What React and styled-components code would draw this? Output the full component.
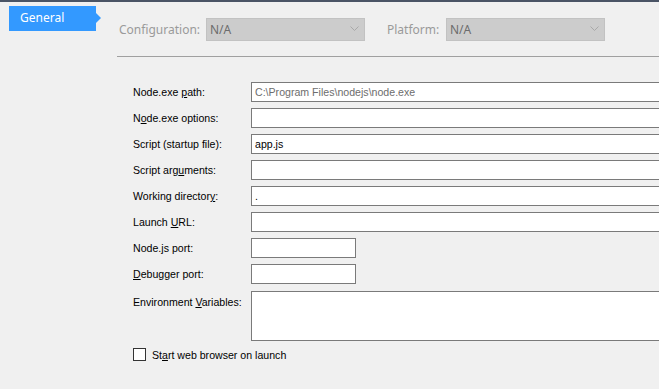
import React from 'react';
import styled, { createGlobalStyle } from 'styled-components';

const GlobalStyle = createGlobalStyle`
  html, body {
    margin: 0;
    padding: 0;
    background: #f0f0f0;
    overflow: hidden;
  }
`;

const Window = styled.div`
  display: flex;
  height: 389px;
  box-sizing: border-box;
  border-top: 2px solid #4a5465;
  background: #f0f0f0;
  overflow: hidden;
`;

const Sidebar = styled.div`
  width: 117px;
  flex: none;
  padding: 4px 0 0 9px;
  box-sizing: border-box;
`;

const Tab = styled.div`
  position: relative;
  width: 87px;
  height: 25px;
  background: #3399ff;
  color: #fff;
  font-family: "Segoe UI", "Noto Sans", sans-serif;
  font-size: 12px;
  line-height: 24px;
  padding-left: 11px;
  box-sizing: border-box;
  &::after {
    content: '';
    position: absolute;
    left: 100%;
    top: 7px;
    border-left: 5px solid #3399ff;
    border-top: 5.5px solid transparent;
    border-bottom: 5.5px solid transparent;
  }
`;

const Main = styled.div`
  flex: 1;
  display: flex;
  flex-direction: column;
  min-width: 0;
`;

const Header = styled.div`
  height: 54px;
  flex: none;
  display: flex;
  align-items: center;
  border-bottom: 1px solid #a0a0a0;
  padding-left: 2px;
  font-family: "Segoe UI", "Noto Sans", sans-serif;
  font-size: 12px;
`;

const HeaderLabel = styled.span`
  width: ${p => p.$w}px;
  color: #9a9a9a;
  flex: none;
`;

const Combo = styled.div`
  width: 159px;
  height: 23px;
  box-sizing: border-box;
  background: #cccccc;
  border: 1px solid #c2c2c2;
  color: #6d6d6d;
  display: flex;
  align-items: center;
  justify-content: space-between;
  padding: 0 5px 0 3px;
  margin-right: ${p => p.$mr || 0}px;
  flex: none;
`;

const Chevron = () => (
  <svg width="9" height="6" viewBox="0 0 9 6">
    <polyline points="0.5,0.5 4.5,4.5 8.5,0.5" fill="none" stroke="#a8a8a8" strokeWidth="1" />
  </svg>
);

const Form = styled.div`
  display: grid;
  grid-template-columns: 118px auto;
  row-gap: 6px;
  padding: 25px 0 0 16px;
  font-family: "Liberation Sans", Arial, sans-serif;
  font-size: 10.6px;
  color: #000;
`;

const Label = styled.label`
  align-self: ${p => (p.$top ? 'start' : 'center')};
  padding-top: ${p => (p.$top ? 5 : 0)}px;
  margin-top: ${p => p.$mt || 0}px;
  white-space: nowrap;
`;

const Input = styled.div`
  width: ${p => (p.$short ? 105 : 440)}px;
  height: ${p => p.$h || 20}px;
  margin-top: ${p => p.$mt || 0}px;
  box-sizing: border-box;
  background: #fff;
  border: 1px solid #7a7a7a;
  padding: 2px 3px 0;
  line-height: 15px;
  color: ${p => (p.$muted ? '#6d6d6d' : '#000')};
`;

const CheckRow = styled.label`
  grid-column: 1 / span 2;
  display: flex;
  align-items: center;
  gap: 6px;
  margin-top: 1px;
`;

const Box = styled.span`
  width: 13px;
  height: 13px;
  box-sizing: border-box;
  border: 1px solid #333;
  background: #fff;
`;

const U = styled.span`
  text-decoration: underline;
  text-underline-offset: 1px;
`;

const rows = [
  { label: <>Node.exe <U>p</U>ath:</>, value: 'C:\\Program Files\\nodejs\\node.exe', muted: true },
  { label: <>N<U>o</U>de.exe options:</> },
  { label: <>Script (startup file):</>, value: 'app.js' },
  { label: <>Script arg<U>u</U>ments:</> },
  { label: <>Working director<U>y</U>:</>, value: '.' },
  { label: <>Launch <U>U</U>RL:</> },
  { label: <>Node.<U>j</U>s port:</>, short: true },
  { label: <><U>D</U>ebugger port:</>, short: true },
];

export default function App() {
  return (
    <>
      <GlobalStyle />
      <Window>
        <Sidebar>
          <Tab>General</Tab>
        </Sidebar>
        <Main>
          <Header>
            <HeaderLabel $w={87}>Configuration:</HeaderLabel>
            <Combo $mr={22}>N/A<Chevron /></Combo>
            <HeaderLabel $w={59}>Platform:</HeaderLabel>
            <Combo>N/A<Chevron /></Combo>
          </Header>
          <Form>
            {rows.map((r, i) => (
              <React.Fragment key={i}>
                <Label>{r.label}</Label>
                <Input $short={r.short} $muted={r.muted}>{r.value}</Input>
              </React.Fragment>
            ))}
            <Label $top $mt={1}>Environment <U>V</U>ariables:</Label>
            <Input $h={50} $mt={1} />
            <CheckRow>
              <Box />
              <span>St<U>a</U>rt web browser on launch</span>
            </CheckRow>
          </Form>
        </Main>
      </Window>
    </>
  );
}
